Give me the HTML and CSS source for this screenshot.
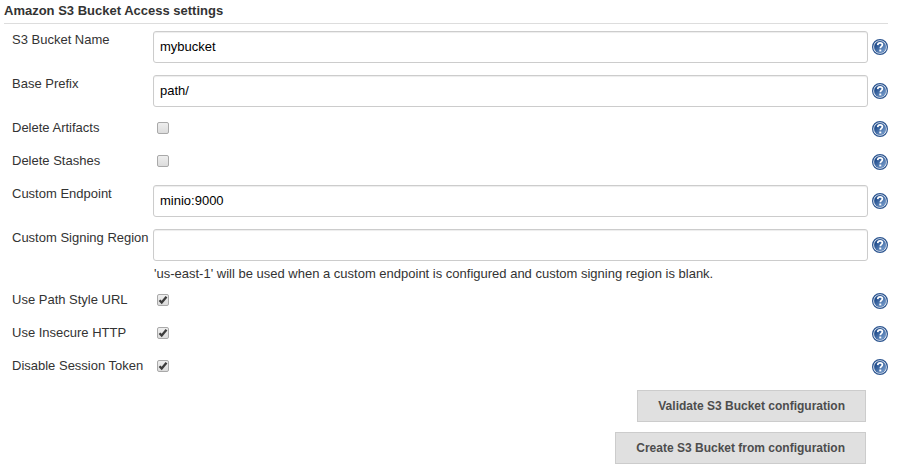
FILE: index.html
```html
<!DOCTYPE html>
<html lang="en">
<head>
<meta charset="utf-8">
<title>Amazon S3 Bucket Access settings</title>
<link rel="stylesheet" href="styles.css">
</head>
<body>
<svg class="defs" aria-hidden="true">
  <defs>
    <linearGradient id="blue" x1="0" y1="0" x2="1" y2="1">
      <stop offset="0.25" stop-color="#234f8e"/>
      <stop offset="1" stop-color="#86abd8"/>
    </linearGradient>
    <symbol id="help" viewBox="0 0 16 16">
      <circle cx="8" cy="8" r="7.4" fill="#fff" stroke="#2c5590" stroke-width="1.2"/>
      <circle cx="8" cy="8" r="5.9" fill="url(#blue)" stroke="#3c659f" stroke-width=".4"/>
      <path d="M5.7 6.1C5.8 4.4 6.8 3.9 8.1 3.9c1.4 0 2.3.7 2.3 1.9 0 1.6-2.1 1.7-2.1 3.5" fill="none" stroke="#fff" stroke-width="1.7"/>
      <path d="M7.3 10.5h2v1.9h-2z" fill="#fff"/>
    </symbol>
    <symbol id="tick" viewBox="0 0 12 12">
      <path d="M2.5 6.3l2.2 2.3L9.5 2.8" fill="none" stroke="#3c3c3c" stroke-width="2.3"/>
    </symbol>
  </defs>
</svg>
<form class="section">
  <h1 class="title">Amazon S3 Bucket Access settings</h1>
  <div class="row">
    <label class="label">S3 Bucket Name</label>
    <div class="field"><input class="text" type="text" value="mybucket"></div>
    <svg class="help"><use href="#help"/></svg>
  </div>
  <div class="row">
    <label class="label">Base Prefix</label>
    <div class="field"><input class="text" type="text" value="path/"></div>
    <svg class="help"><use href="#help"/></svg>
  </div>
  <div class="row check">
    <label class="label">Delete Artifacts</label>
    <div class="field"><span class="box"></span></div>
    <svg class="help"><use href="#help"/></svg>
  </div>
  <div class="row check">
    <label class="label">Delete Stashes</label>
    <div class="field"><span class="box"></span></div>
    <svg class="help"><use href="#help"/></svg>
  </div>
  <div class="row">
    <label class="label">Custom Endpoint</label>
    <div class="field"><input class="text" type="text" value="minio:9000"></div>
    <svg class="help"><use href="#help"/></svg>
  </div>
  <div class="row described">
    <label class="label">Custom Signing Region</label>
    <div class="field">
      <input class="text" type="text" value="">
      <div class="description">'us-east-1' will be used when a custom endpoint is configured and custom signing region is blank.</div>
    </div>
    <svg class="help"><use href="#help"/></svg>
  </div>
  <div class="row check">
    <label class="label">Use Path Style URL</label>
    <div class="field"><span class="box"><svg class="tick"><use href="#tick"/></svg></span></div>
    <svg class="help"><use href="#help"/></svg>
  </div>
  <div class="row check">
    <label class="label">Use Insecure HTTP</label>
    <div class="field"><span class="box"><svg class="tick"><use href="#tick"/></svg></span></div>
    <svg class="help"><use href="#help"/></svg>
  </div>
  <div class="row check">
    <label class="label">Disable Session Token</label>
    <div class="field"><span class="box"><svg class="tick"><use href="#tick"/></svg></span></div>
    <svg class="help"><use href="#help"/></svg>
  </div>
  <div class="actions">
    <button class="button" type="button">Validate S3 Bucket configuration</button>
    <button class="button" type="button">Create S3 Bucket from configuration</button>
  </div>
</form>
</body>
</html>
```
FILE: styles.css
```css
* {
  box-sizing: border-box;
}

body {
  margin: 0;
  background: #fff;
  color: #333;
  font: 13px/17px "Liberation Sans", Arial, sans-serif;
}

.defs {
  position: absolute;
  width: 0;
  height: 0;
}

.section {
  width: 884px;
  margin-left: 4px;
}

.title {
  height: 24px;
  margin: 0 0 7px;
  padding-top: 2px;
  border-bottom: 1px solid #ddd;
  font-size: 13px;
  line-height: 17px;
}

.row {
  display: grid;
  grid-template-columns: 137px 715px 16px;
  column-gap: 4px;
  height: 44px;
  padding-left: 8px;
}

.row.check {
  height: 33px;
}

.row.described {
  height: 62px;
}

.label {
  white-space: nowrap;
}

.text {
  display: block;
  width: 100%;
  height: 32px;
  margin: 0;
  padding: 0 6px 2px;
  border: 1px solid #ccc;
  border-radius: 3px;
  outline: 0;
  background: #fff;
  box-shadow: inset 0 1px 1px rgba(0, 0, 0, 0.075);
  color: #000;
  font: inherit;
}

.description {
  padding: 4px 0 0 1px;
  white-space: nowrap;
}

.help {
  width: 16px;
  height: 16px;
  margin-top: 8px;
}

.check .help {
  margin-top: 2px;
}

.box {
  display: block;
  width: 12px;
  height: 12px;
  margin: 3px 0 0 4px;
  border: 1px solid #a9a9a9;
  border-radius: 2px;
  background: linear-gradient(#eee, #dcdcdc);
}

.tick {
  display: block;
  width: 12px;
  height: 12px;
  margin: -1px;
}

.actions {
  display: flex;
  flex-direction: column;
  align-items: flex-end;
  gap: 10px;
  padding-right: 22px;
}

.button {
  height: 32px;
  padding: 0 20px;
  border: 1px solid #ccc;
  background: #e0e0e0;
  color: #4d4d4d;
  font: bold 12px/30px "Liberation Sans", Arial, sans-serif;
}
```
